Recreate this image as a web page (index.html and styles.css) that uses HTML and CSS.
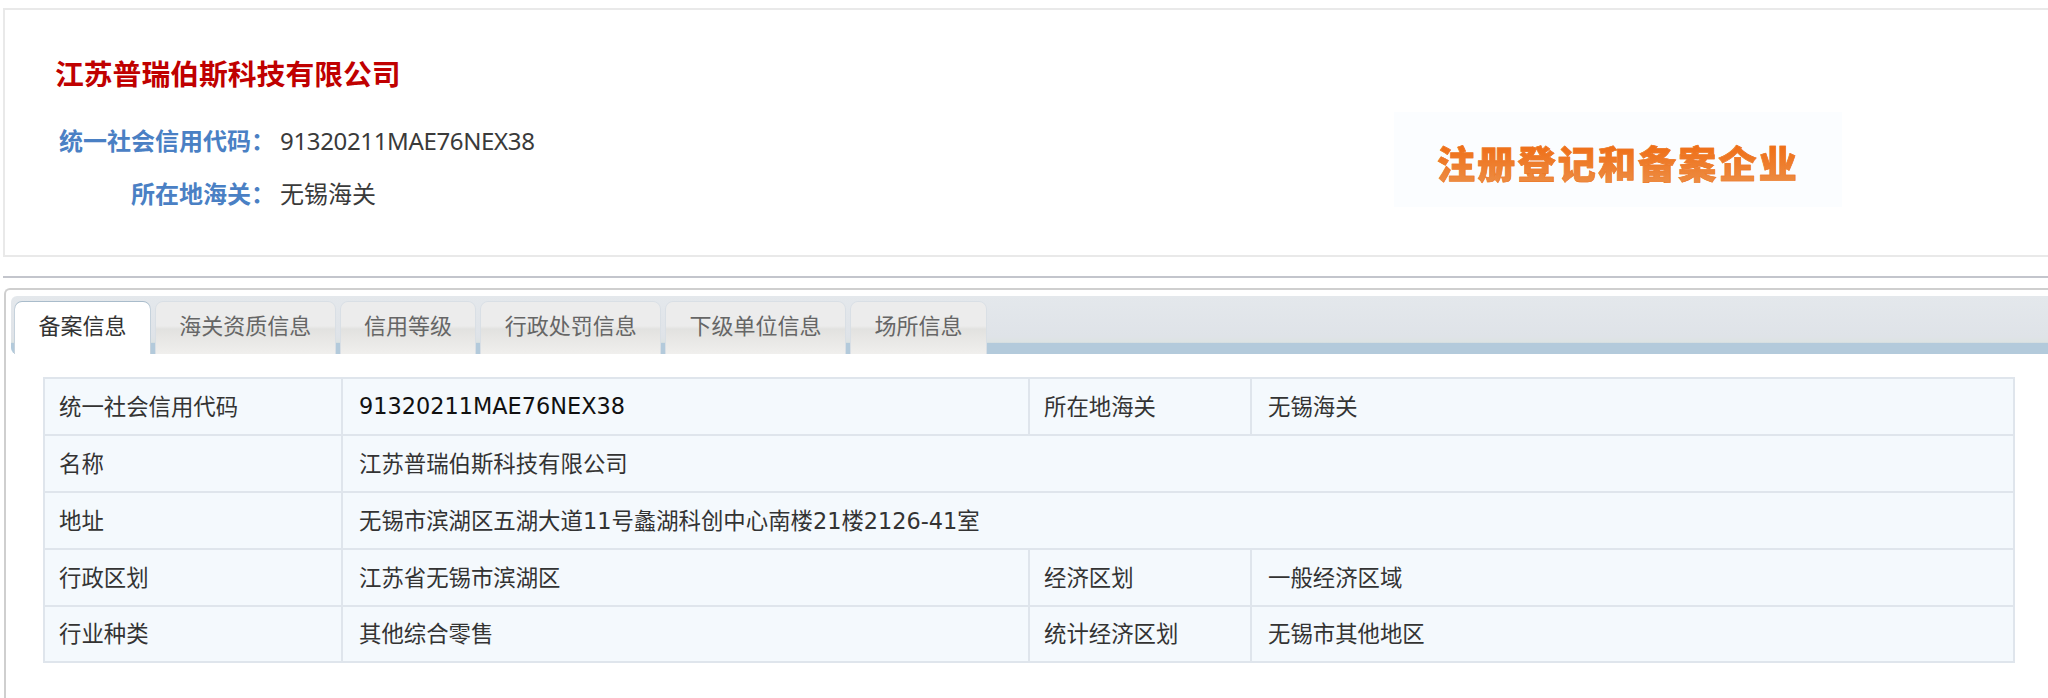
FILE: index.html
```html
<!DOCTYPE html>
<html lang="zh-CN">
<head>
<meta charset="utf-8">
<title>企业备案信息</title>
<link rel="stylesheet" href="styles.css">
</head>
<body>
<section class="summary">
  <div class="summary-info">
    <h1 class="company">江苏普瑞伯斯科技有限公司</h1>
    <div class="fact"><span class="fact-label">统一社会信用代码：</span><span class="fact-value fact-code">91320211MAE76NEX38</span></div>
    <div class="fact"><span class="fact-label">所在地海关：</span><span class="fact-value">无锡海关</span></div>
  </div>
  <div class="badge"><span class="badge-text">注册登记和备案企业</span></div>
</section>
<hr class="divider">
<section class="panel">
  <nav class="tabs">
    <a class="tab tab-active">备案信息</a>
    <a class="tab">海关资质信息</a>
    <a class="tab">信用等级</a>
    <a class="tab">行政处罚信息</a>
    <a class="tab">下级单位信息</a>
    <a class="tab">场所信息</a>
  </nav>
  <div class="panel-body">
    <table class="record">
      <colgroup><col class="c1"><col class="c2"><col class="c3"><col class="c4"></colgroup>
      <tr><th>统一社会信用代码</th><td class="code">91320211MAE76NEX38</td><th>所在地海关</th><td>无锡海关</td></tr>
      <tr><th>名称</th><td colspan="3">江苏普瑞伯斯科技有限公司</td></tr>
      <tr><th>地址</th><td colspan="3">无锡市滨湖区五湖大道11号蠡湖科创中心南楼21楼2126-41室</td></tr>
      <tr><th>行政区划</th><td>江苏省无锡市滨湖区</td><th>经济区划</th><td>一般经济区域</td></tr>
      <tr class="last"><th>行业种类</th><td>其他综合零售</td><th>统计经济区划</th><td>无锡市其他地区</td></tr>
    </table>
  </div>
</section>
</body>
</html>
```
FILE: styles.css
```css
* { box-sizing: border-box; }
html, body { margin: 0; padding: 0; background: #fff; overflow: hidden; }
body {
  height: 698px;
  padding: 8px 0 0 3px;
  font-family: "DejaVu Sans", "Noto Sans CJK SC", sans-serif;
  font-size: 22px;
  color: #333;
}
.summary {
  width: 2100px;
  height: 249px;
  border: 2px solid #e9e9e9;
  border-right: 0;
  display: flex;
}
.summary-info { width: 1387px; padding: 44px 0 0 50px; font-family: "Noto Sans", "Noto Sans CJK SC", sans-serif; }
.company {
  margin: 0 0 20px;
  font-size: 28.8px;
  line-height: 40px;
  font-weight: 700;
  color: #c00000;
}
.fact { display: flex; height: 53px; line-height: 53px; font-size: 24px; }
.fact-label { width: 220px; text-align: right; font-weight: 700; color: #4a80c4; white-space: nowrap; }
.fact-value { margin-left: 5px; color: #3a3a3a; }
.fact-code { letter-spacing: -0.35px; }
.badge {
  width: 448px;
  height: 95px;
  margin: 102px 0 0 2px;
  padding-top: 4px;
  background: #fbfdff;
  display: flex;
  align-items: center;
  justify-content: center;
}
.badge-text {
  font-family: "Noto Sans CJK SC", sans-serif;
  font-size: 38px;
  line-height: 44px;
  font-weight: 900;
  letter-spacing: 2.2px;
  white-space: nowrap;
  color: #ea6c1a;
  background: linear-gradient(#f06a10, #ec8d44);
  -webkit-background-clip: text;
  background-clip: text;
  -webkit-text-fill-color: transparent;
  -webkit-text-stroke: 0.6px #ee7a28;
}
.divider { width: 2100px; height: 2px; margin: 19px 0 10px; border: 0; background: #c3c5cc; }
.panel {
  width: 2100px;
  height: 420px;
  padding: 6px 0 0 5px;
  border: 2px solid #cfcfcf;
  border-right: 0;
  border-bottom: 0;
  border-radius: 6px 0 0 0;
  margin-left: 1px;
}
.tabs {
  display: flex;
  gap: 6px;
  height: 58px;
  padding: 6px 0 0 4px;
  border-radius: 6px 0 0 6px;
  background: linear-gradient(#e4e8ec 0, #dfe3e8 70%, #dde3e2 80%, #b3cadb 81%, #b3cadb 100%);
}
.tab {
  height: 52px;
  padding: 0 23.4px;
  border-radius: 7px 7px 0 0;
  line-height: 44px;
  font-family: "Noto Sans CJK SC", sans-serif;
  color: #666;
  background: linear-gradient(#ececec 0, #ececec 46%, #e2e2e0 52%, #f0efed 100%);
  box-shadow: 0 -1px 0 #d9dfe5, -1px 0 0 #d9dfe5, 1px 0 0 #d9dfe5;
}
.tab-active {
  color: #333;
  background: #fff;
  box-shadow: 0 -1px 0 #a9bccb, -1px 0 0 #c6d2dc, 1px 0 0 #c6d2dc;
}
.panel-body { padding: 23px 0 0 32px; }
.record {
  width: 1970px;
  table-layout: fixed;
  border-collapse: collapse;
  background: #f4f9fd;
  font-family: "DejaVu Sans", "Noto Sans CJK SC", sans-serif;
  font-size: 22.4px;
}
.c1 { width: 298px; }
.c2 { width: 687px; }
.c3 { width: 222px; }
.c4 { width: 763px; }
.record tr { height: 57px; }
.record tr.last { height: 56px; }
.record th, .record td {
  border: 2px solid #dfe5ec;
  font-weight: 400;
  text-align: left;
  white-space: nowrap;
  padding: 0 0 4px 14px;
  color: #333;
}
.record td { padding-left: 16px; }
.record .code { color: #111; padding-bottom: 2px; }
```
